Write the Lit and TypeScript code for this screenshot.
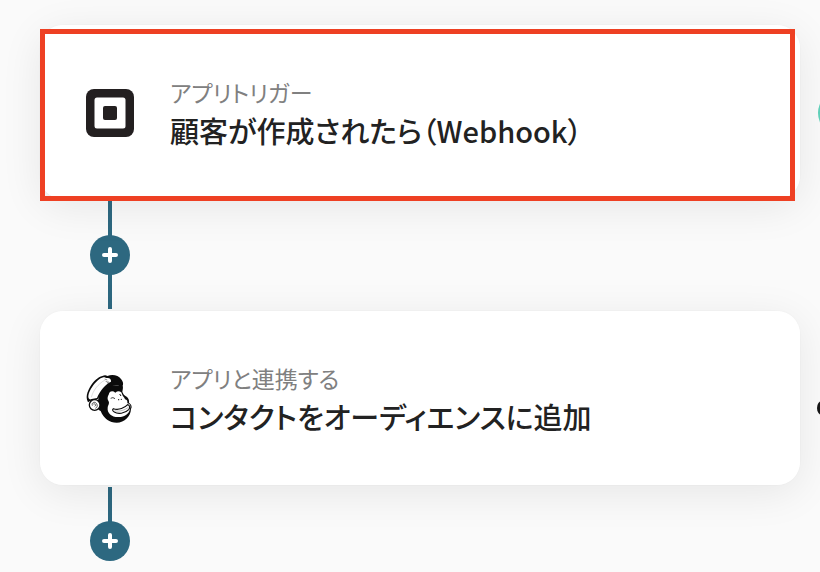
import { LitElement, html, css } from "lit";
import { customElement, property } from "lit/decorators.js";

const squareIcon = html`<svg class="icon" viewBox="0 0 48 48" aria-hidden="true">
  <rect width="48" height="48" rx="8" fill="#231f20" />
  <rect x="8.5" y="8.5" width="31" height="31" rx="2.5" fill="#fff" />
  <rect x="17" y="17" width="14" height="14" rx="2" fill="#231f20" />
</svg>`;

const monkeyIcon = html`<svg class="icon" viewBox="48 45 144 144" aria-hidden="true">
  <path d="M84 122 C88 98 100 82 122 76 L158 77 C160 83 158 89 157 95 C159 101 163 107 170 110 C176 115 178 121 177 128 C185 133 187 141 183 147 C182 169 164 188 140 188 C119 188 101 176 92 153 C85 150 83 145 84 140 Z" fill="#0b0b0b" />
  <path d="M51 119 C48 108 52 95 60 81 C70 64 84 51 97 48 C103 45 108 45 112 48 C128 42 145 46 153 57 C161 66 161 75 155 81 C142 74 124 76 112 84 C100 92 92 102 84 117 L76 121 C64 119 58 124 54 127 Z" fill="#0b0b0b" />
  <path d="M56 115 C53 108 57 95 66 82 C76 66 90 54 100 52 C105 51 109 55 113 54 C120 54 124 59 123 65 C107 72 90 91 81 114 C76 116 70 115 65 117 C61 119 58 119 56 115 Z" fill="#fff" />
  <path d="M64 112 C69 92 84 72 105 60" fill="none" stroke="#aaa" stroke-width="1.2" />
  <path d="M104 57 l8 3 m-5 4 l8 3 m-4 3 l6 -5" fill="none" stroke="#555" stroke-width="2" />
  <circle cx="74" cy="135" r="16" fill="#fff" stroke="#0b0b0b" stroke-width="4" />
  <path d="M67 137 C64 127 74 124 79 130 C84 136 82 143 76 145 M70 132 C77 130 79 137 74 139" fill="none" stroke="#222" stroke-width="2.2" />
  <path d="M116 104 C118 93 128 91 136 98 C144 91 155 94 156 102 C158 109 163 111 165 118 C171 119 173 124 172 130 C181 132 183 139 180 146 C178 161 164 171 146 171 C126 172 111 160 113 143 C114 134 120 130 115 122 C111 116 113 109 116 104 Z" fill="#fff" />
  <path d="M130 146 C146 152 165 143 173 134 C180 136 181 143 176 149 C165 161 143 163 133 156 C128 153 126 149 130 146 Z" fill="#fff" stroke="#0b0b0b" stroke-width="3.4" stroke-linejoin="round" />
  <path d="M134 152 C149 156 165 150 176 141" fill="none" stroke="#777" stroke-width="1.5" />
  <path d="M122 115 q7 -5 13 1" fill="none" stroke="#444" stroke-width="3" />
  <path d="M149 102 l4 6" fill="none" stroke="#111" stroke-width="3" />
  <circle cx="146" cy="119" r="1.8" fill="#0b0b0b" />
  <circle cx="154" cy="118" r="1.8" fill="#0b0b0b" />
</svg>`;

const steps = [
  { icon: squareIcon, kind: "アプリトリガー", name: "顧客が作成されたら（Webhook）", selected: true },
  { icon: monkeyIcon, kind: "アプリと連携する", name: "コンタクトをオーディエンスに追加", selected: false },
];

@customElement("flow-step")
class FlowStep extends LitElement {
  @property({ attribute: false }) step = steps[0];

  static styles = css`
    :host {
      display: block;
    }
    .card {
      position: relative;
      box-sizing: border-box;
      min-height: 176px;
      padding: 2px 46px 0;
      display: flex;
      align-items: center;
      gap: 36px;
      background: #fff;
      background-clip: padding-box;
      border: 1px solid rgba(0, 0, 0, 0.01);
      border-radius: 24px;
      box-shadow: 0 8px 40px rgba(0, 0, 0, 0.08);
    }
    .selected::after {
      content: "";
      position: absolute;
      inset: 4px 5px -2px 0;
      border: 5px solid #ee4023;
    }
    .icon {
      flex: none;
      width: 48px;
      height: 48px;
    }
    .text {
      flex: 1;
      padding-top: 2px;
      font-feature-settings: "palt";
    }
    .kind {
      margin: 0;
      font-size: 23px;
      line-height: 32px;
      font-weight: 400;
      color: #808080;
    }
    .name {
      margin: 0;
      font-size: 29px;
      line-height: 44px;
      font-weight: 500;
      color: #222;
    }
  `;

  render() {
    const { icon, kind, name, selected } = this.step;
    return html`<section class="card ${selected ? "selected" : ""}">
      ${icon}
      <div class="text">
        <p class="kind">${kind}</p>
        <h2 class="name">${name}</h2>
      </div>
    </section>`;
  }
}

@customElement("app-root")
class AppRoot extends LitElement {
  static styles = css`
    :host {
      display: flex;
      box-sizing: border-box;
      min-height: 100vh;
      max-height: 100vh;
      padding: 24px 0 0 39px;
      overflow: hidden;
      background: #fafafa;
      font-family: "Noto Sans CJK JP", "Noto Sans", sans-serif;
    }
    .flow {
      flex: 1;
      min-width: 0;
    }
    .link {
      display: flex;
      align-items: center;
      width: 40px;
      height: 108px;
      margin: 1px 0 1px 51px;
      background: linear-gradient(#2d6880, #2d6880) center / 4px 100% no-repeat;
    }
    .last {
      background-size: 4px 50%;
      background-position: top;
    }
    .add {
      display: grid;
      place-items: center;
      width: 40px;
      height: 40px;
      padding: 0;
      border: 0;
      border-radius: 50%;
      background: #2d6880;
    }
    .plus {
      width: 16px;
      height: 16px;
    }
    .rail {
      position: relative;
      flex: none;
      width: 19px;
      overflow: hidden;
    }
    .peek {
      display: block;
      width: 48px;
      height: 48px;
      margin: 65px 0 238px 16px;
    }
  `;

  render() {
    return html`
      <main class="flow">
        ${steps.map(
          (step, i) => html`
            <flow-step .step=${step}></flow-step>
            <div class="link ${i === steps.length - 1 ? "last" : ""}">
              <button class="add" type="button" aria-label="ステップを追加">
                <svg class="plus" viewBox="0 0 16 16" aria-hidden="true">
                  <path d="M8 2 V14 M2 8 H14" stroke="#fff" stroke-width="4" stroke-linecap="round" />
                </svg>
              </button>
            </div>
          `
        )}
      </main>
      <aside class="rail">
        <svg class="peek" viewBox="0 0 48 48" aria-hidden="true">
          <circle cx="24" cy="24" r="23" fill="#5fcfb8" />
        </svg>
        <svg class="peek" viewBox="0 0 48 48" aria-hidden="true">
          <ellipse cx="5" cy="33" rx="5" ry="7" fill="#151515" />
        </svg>
      </aside>
    `;
  }
}
